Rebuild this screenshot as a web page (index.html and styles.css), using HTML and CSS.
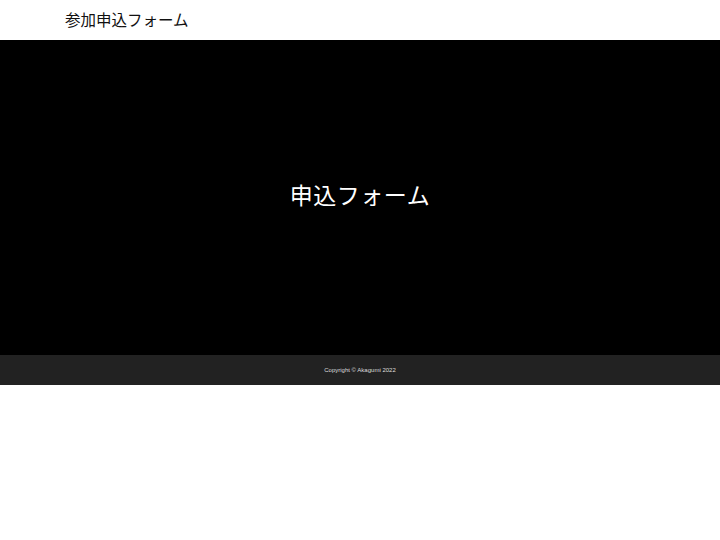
FILE: index.html
```html
<!DOCTYPE html>
<html lang="ja">
<head>
<meta charset="utf-8">
<title>参加申込フォーム</title>
<link rel="stylesheet" href="styles.css">
</head>
<body>
<header class="site-header">
  <h1 class="site-title">参加申込フォーム</h1>
</header>
<main class="hero">
  <h2 class="hero-title">申込フォーム</h2>
</main>
<footer class="site-footer">
  <p class="copyright">Copyright © Akagumi 2022</p>
</footer>
</body>
</html>
```
FILE: styles.css
```css
html, body {
  margin: 0;
  padding: 0;
  background: #fff;
  font-family: "Liberation Sans", "Noto Sans CJK JP", sans-serif;
}
.site-header {
  height: 40px;
  display: flex;
  align-items: center;
  padding: 0 65px;
  background: #fff;
}
.site-title {
  margin: 1px 0 0;
  font-size: 15.5px;
  font-weight: normal;
  color: #111;
  line-height: 1;
}
.hero {
  height: 315px;
  background: #000;
  display: flex;
  align-items: center;
  justify-content: center;
}
.hero-title {
  margin: 0 0 2px;
  font-size: 23px;
  font-weight: normal;
  color: #fff;
  line-height: 1;
  letter-spacing: 0.5px;
}
.site-footer {
  height: 30px;
  background: #222;
  display: flex;
  align-items: center;
  justify-content: center;
}
.copyright {
  margin: 0;
  font-size: 6px;
  color: #ddd;
}
```
